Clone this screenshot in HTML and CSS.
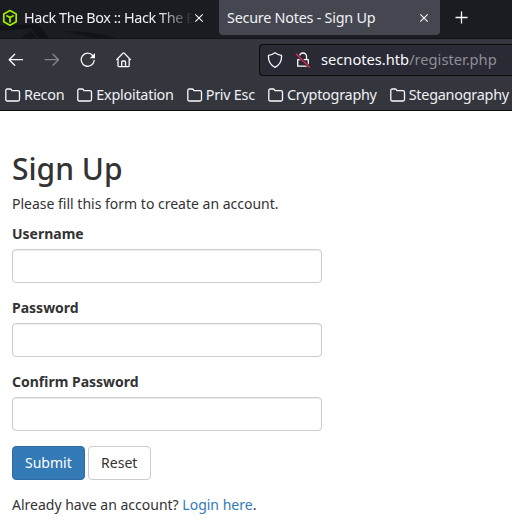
FILE: index.html
```html
<!DOCTYPE html>
<html lang="en">
<head>
<meta charset="utf-8">
<title>Secure Notes - Sign Up</title>
<link rel="stylesheet" href="styles.css">
</head>
<body>
<header class="browser">
  <div class="tabs">
    <svg class="theme-art" width="130" height="14" viewBox="0 0 130 14"><path d="M0 2 38 0 49 14H39L31 4 0 7Z" fill="#111216"/><path d="M21 14 31 7 37 14Z" fill="#121317"/><path d="M62 7Q92 7 117 14H94Q79 10 62 7Z" fill="#121317"/></svg>
    <div class="tab">
      <svg class="favicon" width="16" height="18" viewBox="0 0 16 18" fill="none" stroke="#9fef00" stroke-width="1.7" stroke-linejoin="round"><path d="M8 1.6 14.2 5V12.8L8 16.2 1.8 12.8V5ZM4.3 6.5 8 8.6 11.7 6.5M8 8.6V13.6"/></svg>
      <span class="tab-title fade">Hack The Box :: Hack The B</span>
      <svg class="close" width="10" height="10" viewBox="0 0 10 10"><path d="m1.3 1.3 7.4 7.4m0-7.4-7.4 7.4"/></svg>
    </div>
    <div class="tab active">
      <span class="tab-title">Secure Notes - Sign Up</span>
      <svg class="close" width="10" height="10" viewBox="0 0 10 10"><path d="m1.3 1.3 7.4 7.4m0-7.4-7.4 7.4"/></svg>
    </div>
    <svg class="plus" width="14" height="14" viewBox="0 0 14 14"><path d="M7.5 1.5V13.5M1.5 7.5H13.5"/></svg>
  </div>
  <div class="toolbar">
    <svg class="icon" width="16" height="16" viewBox="0 0 16 16"><path d="M14.5 7.7H1.2M6.7 2.2 1.2 7.7 6.7 13.2"/></svg>
    <svg class="icon dim" width="16" height="16" viewBox="0 0 16 16"><path d="M1.2 7.7H14.5M9 2.2 14.5 7.7 9 13.2"/></svg>
    <svg class="icon" width="16" height="16" viewBox="0 0 16 16"><path d="M12.7 3.5A6.5 6.5 0 1 0 14.2 8.5"/><path d="M15 1V6.2H9.8Z" fill="#fbfbfe" stroke="none"/></svg>
    <svg class="icon" width="16" height="16" viewBox="0 0 16 16"><path d="M.7 7.6 6.9 1.2Q7.6 .6 8.3 1.2L14.5 7.6M2 6.5V13.5Q2 14.7 3.2 14.7H12Q13.2 14.7 13.2 13.5V6.5M5.7 14.7V10Q5.7 9 6.7 9H8.5Q9.5 9 9.5 10V14.7"/></svg>
    <div class="urlbar">
      <svg class="icon" width="16" height="16" viewBox="0 0 16 16"><path d="M8 .8Q10.8 3 14.5 3.4C15 9.6 12.4 13.2 8 15.3 3.6 13.2 1 9.6 1.5 3.4Q5.2 3 8 .8Z"/></svg>
      <svg class="icon" width="16" height="16" viewBox="0 0 16 16"><path d="M4.5 7.5V4.5a3.5 3.5 0 0 1 7 0V7.5M2.7 7.7H13.3V14.2H2.7Z"/><path d="m1.4 2.3 13 12.7" stroke="#2b2a33" stroke-width="3"/><path d="m1.2 2 13.3 13.2" stroke="#e22850"/></svg>
      <span class="url"><span class="host">secnotes.htb</span>/register.php</span>
    </div>
  </div>
  <nav class="bookmarks">
    <span class="bookmark"><svg class="icon" width="16" height="14" viewBox="0 0 16 14"><path d="M.8 11.5V2.5Q.8 1 2.3 1H5Q6 1 6.4 1.7L7 2.7H13Q14.5 2.7 14.5 4.2V11.5Q14.5 13 13 13H2.3Q.8 13 .8 11.5Z"/></svg><span>Recon</span></span>
    <span class="bookmark"><svg class="icon" width="16" height="14" viewBox="0 0 16 14"><path d="M.8 11.5V2.5Q.8 1 2.3 1H5Q6 1 6.4 1.7L7 2.7H13Q14.5 2.7 14.5 4.2V11.5Q14.5 13 13 13H2.3Q.8 13 .8 11.5Z"/></svg><span>Exploitation</span></span>
    <span class="bookmark"><svg class="icon" width="16" height="14" viewBox="0 0 16 14"><path d="M.8 11.5V2.5Q.8 1 2.3 1H5Q6 1 6.4 1.7L7 2.7H13Q14.5 2.7 14.5 4.2V11.5Q14.5 13 13 13H2.3Q.8 13 .8 11.5Z"/></svg><span>Priv Esc</span></span>
    <span class="bookmark"><svg class="icon" width="16" height="14" viewBox="0 0 16 14"><path d="M.8 11.5V2.5Q.8 1 2.3 1H5Q6 1 6.4 1.7L7 2.7H13Q14.5 2.7 14.5 4.2V11.5Q14.5 13 13 13H2.3Q.8 13 .8 11.5Z"/></svg><span>Cryptography</span></span>
    <span class="bookmark"><svg class="icon" width="16" height="14" viewBox="0 0 16 14"><path d="M.8 11.5V2.5Q.8 1 2.3 1H5Q6 1 6.4 1.7L7 2.7H13Q14.5 2.7 14.5 4.2V11.5Q14.5 13 13 13H2.3Q.8 13 .8 11.5Z"/></svg><span>Steganography</span></span>
  </nav>
</header>
<main class="page">
  <h2>Sign Up</h2>
  <p>Please fill this form to create an account.</p>
  <form>
    <div class="form-group"><label for="username">Username</label><input id="username" type="text"></div>
    <div class="form-group"><label for="password">Password</label><input id="password" type="password"></div>
    <div class="form-group"><label for="confirm">Confirm Password</label><input id="confirm" type="password"></div>
    <div class="form-group buttons"><button type="button" class="btn primary">Submit</button><button type="reset" class="btn reset">Reset</button></div>
    <p>Already have an account? <a href="#">Login here</a>.</p>
  </form>
</main>
</body>
</html>
```
FILE: styles.css
```css
* { box-sizing: border-box; }
body {
  margin: 0;
  background: #fff;
  color: #333;
  font: 14px/20px "Noto Sans", sans-serif;
  overflow: hidden;
}
svg { display: block; flex: none; }
.browser { color: #f0f0f4; font-size: 14.4px; letter-spacing: -.25px; background: #34363e; height: 111px; border-bottom: 1px solid #0c0c0d; }
.tabs { position: relative; display: flex; height: 39px; background: #1b1c21; border-bottom: 1px solid #121217; }
.theme-art { position: absolute; left: 0; bottom: 0; }
.tab { position: relative; display: flex; align-items: center; height: 35px; width: 219px; padding: 0 15px 0 2px; white-space: nowrap; }
.tab.active { width: 221px; padding: 0 11px 0 8px; background: #44474f; border-radius: 0 0 4px 4px; }
.tab-title { flex: 1; min-width: 0; }
.fade { letter-spacing: -.4px; margin-left: 6px; margin-right: 1px; -webkit-mask-image: linear-gradient(90deg, #000 80%, transparent); mask-image: linear-gradient(90deg, #000 80%, transparent); }
.close, .plus { fill: none; stroke: #fbfbfe; stroke-width: 1.1; }
.plus { margin: 10px 0 0 14px; stroke-width: 1.3; }
.toolbar { display: flex; align-items: center; height: 41px; padding-left: 8px; }
.icon { fill: none; stroke: #fbfbfe; stroke-width: 1.3; stroke-linejoin: round; stroke-linecap: round; }
.toolbar > .icon { margin-right: 20px; }
.dim { opacity: .4; }
.urlbar { display: flex; align-items: center; gap: 12px; height: 32px; width: 253px; flex: none; margin-left: 107px; padding-left: 7px; background: #292a34; border: 1px solid #0c0c0d; border-right: 0; border-radius: 4px 0 0 4px; }
.url { color: #8f8f98; font-size: 14.67px; letter-spacing: 0; white-space: nowrap; margin: -2px 0 0 -2px; }
.host { color: #fbfbfe; }
.bookmarks { display: flex; align-items: center; gap: 13px; height: 30px; padding-left: 5px; white-space: nowrap; }
.bookmark { display: flex; align-items: center; gap: 3px; flex: none; }
.bookmark span { margin-top: -1px; }
.page { padding: 21px 12px; width: 334px; }
h2 { margin: 20px 0 9px; font-size: 30px; line-height: 33px; font-weight: 500; }
p { margin: 0 0 10px; }
.form-group { margin-bottom: 15px; }
label { display: block; margin-bottom: 5px; font-weight: 700; }
input { display: block; width: 100%; height: 34px; padding: 6px 12px; border: 1px solid #ccc; border-radius: 4px; box-shadow: inset 0 1px 1px rgba(0,0,0,.075); }
.buttons { display: flex; gap: 3px; }
.btn { height: 34px; padding: 6px 12px; font: inherit; color: #333; background: #fff; border: 1px solid #ccc; border-radius: 4px; }
.reset { width: 63px; }
.primary { color: #fff; background: #337ab7; border-color: #2e6da4; }
a { color: #337ab7; text-decoration: none; }
```
